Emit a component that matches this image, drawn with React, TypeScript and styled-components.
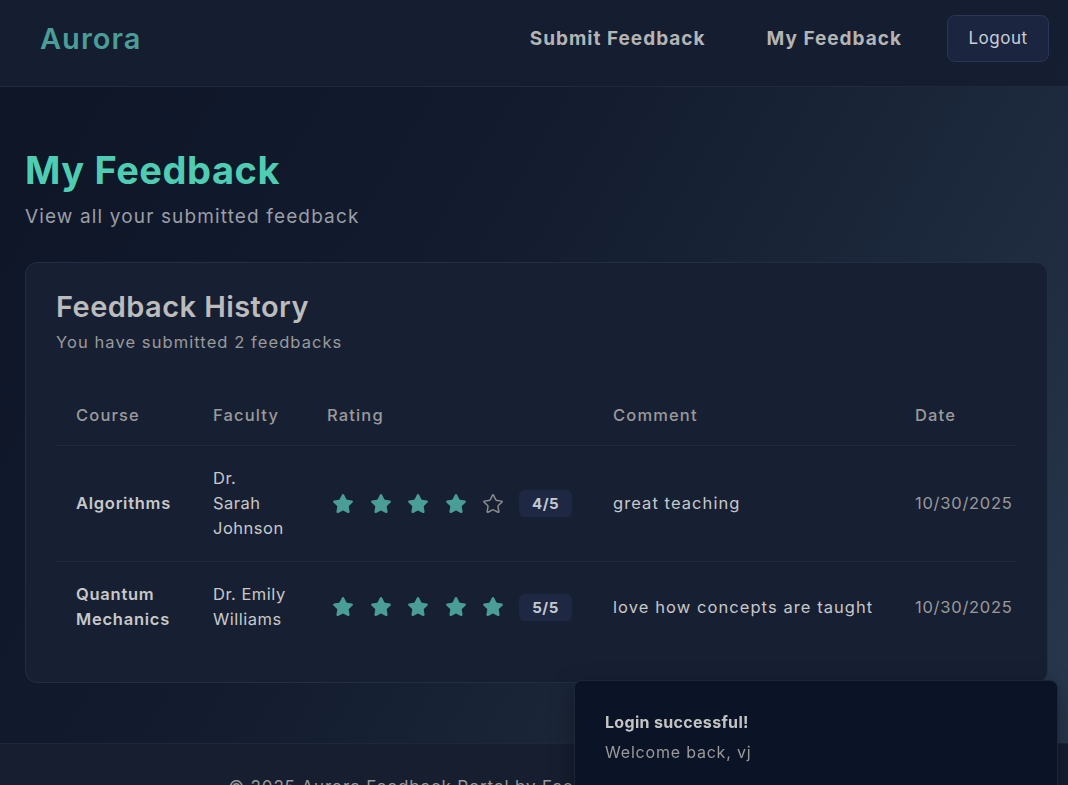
import React from "react";
import styled, { createGlobalStyle } from "styled-components";
import { Star } from "lucide-react";

const GlobalStyle = createGlobalStyle`
  * { box-sizing: border-box; }
  html, body { margin: 0; padding: 0; }
  body {
    font-family: Inter, "Open Sans", sans-serif;
    background: #0f172a;
    color: #c8c8c8;
    letter-spacing: 0.03em;
  }
`;

const Page = styled.div`
  min-height: 100vh;
  display: flex;
  flex-direction: column;
  background: linear-gradient(120deg, #0d1527 0%, #121a2d 35%, #1c283b 70%, #2a3a4f 100%);
`;

const NavBar = styled.header`
  height: 87px;
  display: flex;
  align-items: center;
  justify-content: space-between;
  padding: 0 19px 10px 40px;
  background: rgba(22, 30, 49, 0.97);
  border-bottom: 1px solid #1f2a40;
`;

const Logo = styled.div`
  font-size: 29px;
  font-weight: 600;
  color: #4a9e97;
  letter-spacing: 0.035em;
`;

const NavLinks = styled.nav`
  display: flex;
  align-items: center;
`;

const NavLink = styled.a<{ $gap: number }>`
  font-size: 19px;
  font-weight: 700;
  color: #b4b4b4;
  text-decoration: none;
  margin-right: ${(p) => p.$gap}px;
  letter-spacing: 1px;
`;

const LogoutButton = styled.button`
  width: 102px;
  height: 47px;
  border-radius: 8px;
  background: #1b2540;
  border: 1px solid #2a3654;
  color: #c9ced6;
  font-family: Inter, sans-serif;
  font-size: 17px;
  letter-spacing: 0.03em;
`;

const Main = styled.main`
  flex: 1;
  padding: 60px 20px 60px 25px;
`;

const Title = styled.h1`
  margin: 0;
  font-size: 38px;
  line-height: 46px;
  font-weight: 700;
  color: #4fcdb2;
  letter-spacing: 0.015em;
`;

const Subtitle = styled.p`
  margin: 9px 0 0;
  font-size: 19px;
  line-height: 30px;
  color: #9a9ea6;
  letter-spacing: 0.06em;
`;

const Card = styled.section`
  margin-top: 30px;
  background: #172033;
  border: 1px solid #232e45;
  border-radius: 12px;
  padding: 24px 30px 30px;
`;

const CardTitle = styled.h2`
  margin: 0;
  font-size: 29px;
  line-height: 40px;
  font-weight: 600;
  color: #bcbcbc;
  letter-spacing: 0.015em;
`;

const CardSubtitle = styled.p`
  margin: 3px 0 0;
  font-size: 16.5px;
  line-height: 24px;
  color: #9a9a9a;
  letter-spacing: 0.065em;
`;

const Table = styled.table`
  margin-top: 32px;
  width: 960px;
  border-collapse: collapse;
  table-layout: fixed;
`;

const HeadCell = styled.th`
  text-align: left;
  font-weight: 500;
  font-size: 16.5px;
  line-height: 24px;
  color: #9a9a9a;
  padding: 17px 20px 18px;
  border-bottom: 1px solid #1f2a3e;
  letter-spacing: 0.07em;
`;

const Row = styled.tr<{ $last?: boolean }>`
  border-bottom: ${(p) => (p.$last ? "none" : "1px solid #1f2a3e")};
`;

type Tone = "strong" | "normal" | "muted" | "name";

const spacing: Record<Tone, string> = {
  strong: "0.045em",
  normal: "0.065em",
  muted: "0.045em",
  name: "0.03em",
};

const Cell = styled.td<{ $tone?: Tone }>`
  padding: 20px 20px 20px;
  font-size: 16.5px;
  line-height: 25px;
  vertical-align: middle;
  letter-spacing: ${(p) => spacing[p.$tone ?? "normal"]};
  font-weight: ${(p) => (p.$tone === "strong" ? 600 : 400)};
  color: ${(p) => (p.$tone === "muted" ? "#9a9a9a" : "#c8c8c8")};
`;

const RatingWrap = styled.div`
  display: flex;
  align-items: center;
`;

const Stars = styled.div`
  display: flex;
  align-items: center;
  gap: 15.5px;
  padding-left: 5px;
`;

const Badge = styled.span`
  margin-left: 15px;
  display: inline-flex;
  align-items: center;
  justify-content: center;
  width: 53px;
  height: 27px;
  border-radius: 6px;
  background: #1e2842;
  color: #c4c8d0;
  font-size: 15px;
  font-weight: 700;
  letter-spacing: 0.03em;
`;

const Footer = styled.footer`
  background: #161e30;
  border-top: 1px solid #1e283b;
  padding: 33px 20px 32px;
  text-align: center;
  font-size: 17px;
  color: #9a9a9a;
  letter-spacing: 0.05em;
`;

const Toast = styled.div`
  position: fixed;
  top: 680px;
  right: 10px;
  width: 484px;
  height: 140px;
  background: #0b1326;
  border: 1px solid #1d2739;
  border-radius: 8px;
  padding: 28px 30px;
  box-shadow: 0 8px 24px rgba(0, 0, 0, 0.35);
`;

const ToastTitle = styled.div`
  font-size: 16px;
  line-height: 26px;
  font-weight: 700;
  color: #c4c4c4;
  letter-spacing: 0.02em;
`;

const ToastText = styled.div`
  margin-top: 5px;
  font-size: 16px;
  line-height: 24px;
  color: #9a9a9a;
  letter-spacing: 0.05em;
`;

const STAR = "#4a9e97";

function RatingStars({ value }: { value: number }) {
  return (
    <RatingWrap>
      <Stars>
        {[1, 2, 3, 4, 5].map((i) =>
          i <= value ? (
            <Star key={i} size={22} color={STAR} fill={STAR} strokeWidth={1.6} />
          ) : (
            <Star key={i} size={22} color="#8c8c8c" fill="none" strokeWidth={1.6} />
          )
        )}
      </Stars>
      <Badge>{value}/5</Badge>
    </RatingWrap>
  );
}

const rows = [
  { course: "Algorithms", faculty: "Dr. Sarah Johnson", rating: 4, comment: "great teaching", date: "10/30/2025" },
  { course: "Quantum Mechanics", faculty: "Dr. Emily Williams", rating: 5, comment: "love how concepts are taught", date: "10/30/2025" },
];

export default function App() {
  return (
    <Page>
      <GlobalStyle />
      <NavBar>
        <Logo>Aurora</Logo>
        <NavLinks>
          <NavLink href="#" $gap={61}>Submit Feedback</NavLink>
          <NavLink href="#" $gap={45}>My Feedback</NavLink>
          <LogoutButton>Logout</LogoutButton>
        </NavLinks>
      </NavBar>
      <Main>
        <Title>My Feedback</Title>
        <Subtitle>View all your submitted feedback</Subtitle>
        <Card>
          <CardTitle>Feedback History</CardTitle>
          <CardSubtitle>You have submitted 2 feedbacks</CardSubtitle>
          <Table>
            <colgroup>
              <col style={{ width: 137 }} />
              <col style={{ width: 114 }} />
              <col style={{ width: 286 }} />
              <col style={{ width: 302 }} />
              <col style={{ width: 121 }} />
            </colgroup>
            <thead>
              <tr>
                <HeadCell>Course</HeadCell>
                <HeadCell>Faculty</HeadCell>
                <HeadCell>Rating</HeadCell>
                <HeadCell>Comment</HeadCell>
                <HeadCell>Date</HeadCell>
              </tr>
            </thead>
            <tbody>
              {rows.map((r, idx) => (
                <Row key={idx} $last={idx === rows.length - 1}>
                  <Cell $tone="strong">{r.course}</Cell>
                  <Cell $tone="name">{r.faculty}</Cell>
                  <Cell>
                    <RatingStars value={r.rating} />
                  </Cell>
                  <Cell>{r.comment}</Cell>
                  <Cell $tone="muted">{r.date}</Cell>
                </Row>
              ))}
            </tbody>
          </Table>
        </Card>
      </Main>
      <Footer>© 2025 Aurora Feedback Portal by Faculty Team. All rights reserved.</Footer>
      <Toast>
        <ToastTitle>Login successful!</ToastTitle>
        <ToastText>Welcome back, vj</ToastText>
      </Toast>
    </Page>
  );
}
